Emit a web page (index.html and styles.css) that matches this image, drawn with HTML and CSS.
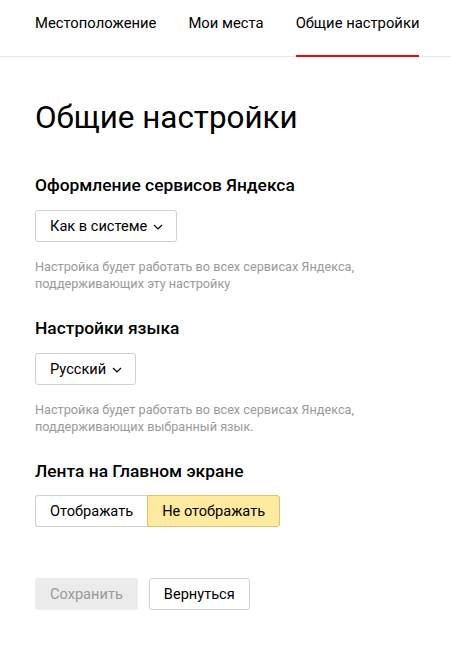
FILE: index.html
```html
<!DOCTYPE html>
<html lang="ru">
<head>
<meta charset="utf-8">
<link rel="stylesheet" href="styles.css">
</head>
<body>
<nav class="tabs">
  <a class="tab">Местоположение</a>
  <a class="tab">Мои места</a>
  <a class="tab tab-active">Общие настройки</a>
</nav>
<main class="content">
  <h1 class="title">Общие настройки</h1>

  <section class="group">
    <h2 class="group-title">Оформление сервисов Яндекса</h2>
    <button class="select">Как в системе <svg class="chev" width="10" height="6" viewBox="0 0 10 6"><path d="M1 1l4 4 4-4" fill="none" stroke="#000" stroke-width="1.2"/></svg></button>
    <p class="hint">Настройка будет работать во всех сервисах Яндекса, поддерживающих эту настройку</p>
  </section>

  <section class="group">
    <h2 class="group-title">Настройки языка</h2>
    <button class="select">Русский <svg class="chev" width="10" height="6" viewBox="0 0 10 6"><path d="M1 1l4 4 4-4" fill="none" stroke="#000" stroke-width="1.2"/></svg></button>
    <p class="hint">Настройка будет работать во всех сервисах Яндекса, поддерживающих выбранный язык.</p>
  </section>

  <section class="group">
    <h2 class="group-title">Лента на Главном экране</h2>
    <div class="segmented">
      <button class="seg">Отображать</button>
      <button class="seg seg-on">Не отображать</button>
    </div>
  </section>

  <div class="actions">
    <button class="btn btn-disabled">Сохранить</button>
    <button class="btn">Вернуться</button>
  </div>
</main>
</body>
</html>
```

FILE: styles.css
```css
* { box-sizing: border-box; }
html, body { margin: 0; padding: 0; background: #fff; }
body {
  font-family: Roboto, "Noto Sans", sans-serif;
  color: #000;
  width: 451px;
}
.tabs {
  display: flex;
  gap: 32px;
  padding: 0 0 0 35px;
  border-bottom: 1px solid #e6e6e6;
  height: 57px;
  white-space: nowrap;
}
.tab {
  font-size: 14.8px;
  line-height: 18px;
  padding-top: 14px;
  color: #000;
  border-bottom: 2px solid transparent;
  margin-bottom: -1px;
}
.tab-active { border-bottom-color: #f00; }
.content { padding: 0 35px; }
.title {
  margin: 41px 0 0;
  font-size: 31.4px;
  line-height: 40px;
  font-weight: 400;
}
.group-title {
  font-size: 17.4px;
  line-height: 22px;
  font-weight: 500;
  margin: 0;
}
.title + .group .group-title { margin-top: 36px; }
.select {
  display: inline-flex;
  align-items: center;
  gap: 6px;
  height: 32px;
  margin-top: 14px;
  padding: 0 13px 0 14px;
  font: inherit;
  font-size: 14.6px;
  color: #000;
  background: #fff;
  border: 1px solid #d0d0d0;
  border-radius: 3px;
}
.chev { margin-top: 1px; }
.hint {
  margin: 16px 0 25px;
  font-size: 12.7px;
  line-height: 17px;
  color: #999;
}
.segmented {
  display: flex;
  margin-top: 13px;
}
.seg {
  height: 32px;
  font: inherit;
  font-size: 14.6px;
  color: #000;
  background: #fff;
  border: 1px solid #d0d0d0;
  padding: 0 14px;
}
.seg:first-child { border-radius: 3px 0 0 3px; border-right: 0; }
.seg-on {
  background: #ffeba0;
  border-color: #dcc072;
  border-radius: 0 3px 3px 0;
}
.actions {
  display: flex;
  gap: 11px;
  margin-top: 51px;
}
.btn {
  height: 32px;
  font: inherit;
  font-size: 14.6px;
  color: #000;
  background: #fff;
  border: 1px solid #d0d0d0;
  border-radius: 3px;
  padding: 0 14px;
}
.btn-disabled {
  background: #ebebeb;
  border-color: #ebebeb;
  color: #999;
}
```
